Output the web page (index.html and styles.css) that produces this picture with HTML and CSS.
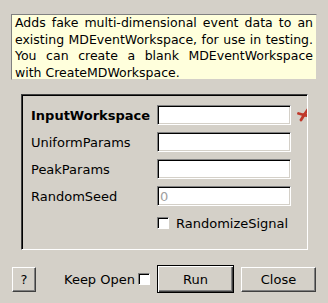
FILE: index.html
```html
<!DOCTYPE html>
<html lang="en">
<head>
<meta charset="UTF-8">
<title>FakeMDEventData</title>
<link rel="stylesheet" href="styles.css">
</head>
<body>
<div class="dialog">
  <div class="description">Adds fake multi-dimensional event data to an existing MDEventWorkspace, for use in testing. You can create a blank MDEventWorkspace with CreateMDWorkspace.</div>

  <div class="group">
    <div class="row">
      <label class="name required" for="inputWs">InputWorkspace</label>
      <input type="text" id="inputWs" class="field">
      <svg class="star" width="14" height="14" viewBox="0 0 14 14">
        <g stroke="#c0392b" stroke-width="2.8" stroke-linecap="round">
          <line x1="7" y1="7" x2="10.5" y2="2"/>
          <line x1="7" y1="7" x2="1.5" y2="5.5"/>
          <line x1="7" y1="7" x2="4" y2="12"/>
          <line x1="7" y1="7" x2="12.5" y2="8"/>
        </g>
      </svg>
    </div>
    <div class="row">
      <label class="name" for="uniform">UniformParams</label>
      <input type="text" id="uniform" class="field">
    </div>
    <div class="row">
      <label class="name" for="peak">PeakParams</label>
      <input type="text" id="peak" class="field">
    </div>
    <div class="row">
      <label class="name" for="seed">RandomSeed</label>
      <input type="text" id="seed" class="field" placeholder="0">
    </div>
    <div class="row check-row">
      <span class="box"></span>
      <span class="check-label">RandomizeSignal</span>
    </div>
  </div>

  <div class="buttons">
    <button class="btn help">?</button>
    <span class="keep">Keep Open</span>
    <span class="box keep-box"></span>
    <button class="btn run">Run</button>
    <button class="btn close">Close</button>
  </div>
</div>
</body>
</html>
```

FILE: styles.css
```css
body {
  margin: 0;
  background-color: #d4d0c8;
  font-family: "DejaVu Sans", sans-serif;
  font-size: 13px;
  color: #000;
}
.dialog {
  width: 328px;
  height: 303px;
  padding: 14px 11px 0 11px;
  box-sizing: border-box;
  display: flex;
  flex-direction: column;
}
.description {
  height: 66px;
  box-sizing: border-box;
  background-color: #ffffdc;
  border: 1px solid;
  border-color: #808080 #d4d0c8 #d4d0c8 #808080;
  padding: 0 3px 0 3px;
  font-size: 12.5px;
  line-height: 16.5px;
  text-align: justify;
}
.group {
  margin: 14px 0 0 10px;
  width: 287px;
  height: 156px;
  box-sizing: border-box;
  border: 1px solid;
  border-color: #404040 #fff #fff #404040;
  box-shadow: inset 1px 1px 0 #000;
  padding: 10px 0 0 9px;
  display: flex;
  flex-direction: column;
  gap: 7px;
  overflow: hidden;
}
.row {
  display: flex;
  align-items: center;
  height: 20px;
  flex: none;
}
.name {
  width: 126px;
  flex: none;
}
.required {
  font-weight: bold;
}
.field {
  width: 134px;
  height: 20px;
  box-sizing: border-box;
  margin: 0;
  padding: 0 2px;
  border: 1px solid;
  border-color: #808080 #fff #fff #808080;
  box-shadow: inset 1px 1px 0 #000, inset -1px -1px 0 #d4d0c8;
  background-color: #fff;
  font-family: inherit;
  font-size: 13px;
  outline: none;
}
.field::placeholder {
  color: #a0a0a0;
}
.star {
  margin-left: 6px;
  flex: none;
}
.check-row {
  height: 12px;
  margin-top: 4px;
  padding-left: 126px;
}
.box {
  display: inline-block;
  width: 12px;
  height: 12px;
  box-sizing: border-box;
  background-color: #fff;
  border: 1px solid;
  border-color: #808080 #fff #fff #808080;
  box-shadow: inset 1px 1px 0 #000;
  flex: none;
}
.check-label {
  margin-left: 7px;
}
.buttons {
  display: flex;
  align-items: center;
  margin-top: 15px;
  height: 28px;
}
.btn {
  height: 25px;
  box-sizing: border-box;
  margin: 0;
  padding: 0;
  background-color: #d4d0c8;
  border: 1px solid;
  border-color: #fff #404040 #404040 #fff;
  box-shadow: inset -1px -1px 0 #808080;
  font-family: inherit;
  font-size: 13px;
  color: #000;
}
.help {
  width: 24px;
  margin-left: 1px;
}
.keep {
  margin-left: 28px;
}
.keep-box {
  margin-left: 3px;
  margin-top: -1px;
}
.run {
  width: 77px;
  height: 28px;
  margin-left: 7px;
  border: 1px solid #000;
  box-shadow: inset 1px 1px 0 #fff, inset -1px -1px 0 #404040, inset -2px -2px 0 #808080;
}
.close {
  width: 75px;
  margin-left: 7px;
}
```
